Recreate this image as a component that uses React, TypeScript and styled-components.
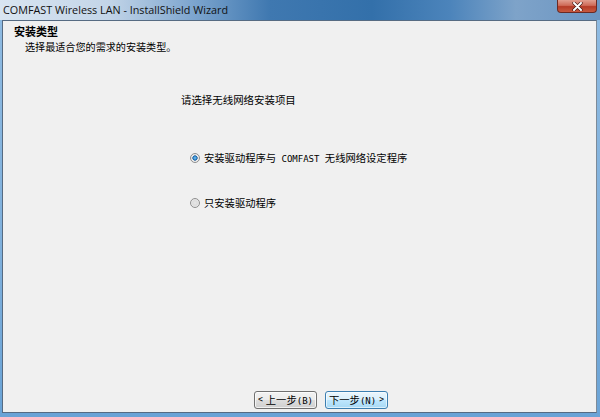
import React from "react";
import styled, { createGlobalStyle } from "styled-components";

const GlobalStyle = createGlobalStyle`
  html, body {
    margin: 0;
    padding: 0;
    width: 600px;
    height: 417px;
    overflow: hidden;
    background: #ffffff;
  }
`;

const CJK = `"Noto Sans CJK SC", "Noto Sans", sans-serif`;

const SWindow = styled.div`
  width: 600px;
  height: 417px;
  display: flex;
  flex-direction: column;
  background: linear-gradient(180deg, #8fbbe2 0%, #7fb0dc 60%, #6aa3d6 100%);
  overflow: hidden;
`;

const STitleBar = styled.div`
  height: 20px;
  flex: none;
  display: flex;
  align-items: flex-start;
  justify-content: space-between;
  padding-left: 3px;
  padding-right: 3px;
  background: linear-gradient(
    90deg,
    #d9e5f1 0%,
    #c3d5e8 18%,
    #7ea6cf 32%,
    #3f78b0 45%,
    #3370aa 62%,
    #4c84bb 75%,
    #7ea3c9 86%,
    #6b95c2 100%
  );
`;

const STitle = styled.div`
  font-family: "Open Sans", "Noto Sans", sans-serif;
  font-size: 10.8px;
  line-height: 20px;
  color: #111111;
  white-space: nowrap;
`;

const SClose = styled.div`
  width: 40px;
  height: 13px;
  box-sizing: border-box;
  border: 1px solid #6b2a24;
  border-top: none;
  border-radius: 0 0 4px 4px;
  background: linear-gradient(180deg, #e19e90 0%, #cf6b58 45%, #b53b27 55%, #c85a40 100%);
  display: flex;
  align-items: center;
  justify-content: center;
`;

const SFrame = styled.div`
  flex: 1;
  display: flex;
  padding: 0 3px 4px 2px;
  min-height: 0;
`;

const SClient = styled.div`
  flex: 1;
  display: flex;
  flex-direction: column;
  background: #f0f0f0;
  border: 1px solid #566b82;
  border-right-color: #7d8b99;
  font-family: ${CJK};
  color: #000000;
`;

const SHeader = styled.div`
  display: flex;
  flex-direction: column;
  gap: 2px;
  padding: 3px 0 0 11px;
`;

const SHeading = styled.div`
  font-size: 11px;
  font-weight: 700;
  line-height: 14px;
`;

const SSubtitle = styled.div`
  font-size: 10.1px;
  line-height: 14px;
  padding-left: 11px;
`;

const SBody = styled.div`
  flex: 1;
  display: flex;
  flex-direction: column;
  padding-left: 178px;
`;

const SQuestion = styled.div`
  font-size: 10.45px;
  line-height: 14px;
  margin-top: 39px;
`;

const SOptions = styled.div`
  display: flex;
  flex-direction: column;
  gap: 31px;
  margin-top: 44px;
  padding-left: 9px;
`;

const SOption = styled.label`
  display: flex;
  align-items: center;
  gap: 4px;
  height: 14px;
  font-size: 10.3px;
  line-height: 14px;
  white-space: nowrap;
`;

const SRadio = styled.span<{ checked?: boolean }>`
  width: 10px;
  height: 10px;
  box-sizing: border-box;
  border-radius: 50%;
  border: 1px solid #8f8f8f;
  background: ${({ checked }) =>
    checked
      ? "radial-gradient(circle, #7ec6f2 0%, #2a7fc4 32%, #1a5a9a 42%, #e6e6e6 50%, #f8f8f8 100%)"
      : "radial-gradient(circle, #e8e8e8 0%, #dcdcdc 40%, #f6f6f6 100%)"};
  flex: none;
`;

const SLatin = styled.span`
  font-family: "DejaVu Sans Mono", "Liberation Mono", monospace;
  font-size: 9px;
  white-space: pre;
`;

const SFooter = styled.div`
  display: flex;
  gap: 8px;
  padding: 0 0 3px 251px;
`;

const SButton = styled.div<{ primary?: boolean }>`
  width: 63px;
  height: 18px;
  box-sizing: border-box;
  border-radius: 3px;
  border: 1px solid ${({ primary }) => (primary ? "#3c7fb1" : "#707070")};
  background: ${({ primary }) =>
    primary
      ? "linear-gradient(180deg, #eaf6fd 0%, #d9f0fc 48%, #bee6fd 52%, #a7d9f5 100%)"
      : "linear-gradient(180deg, #f2f2f2 0%, #ebebeb 48%, #dddddd 52%, #cfcfcf 100%)"};
  box-shadow: inset 0 0 0 1px
    ${({ primary }) => (primary ? "rgba(255,255,255,0.6)" : "rgba(255,255,255,0.7)")};
  display: flex;
  align-items: center;
  justify-content: center;
  gap: 3px;
  font-size: 10.3px;
  line-height: 14px;
  white-space: nowrap;
`;

const SArrow = styled.span`
  font-family: "DejaVu Sans Mono", "Liberation Mono", monospace;
  font-size: 8px;
`;

const App = () => (
  <>
    <GlobalStyle />
    <SWindow>
      <STitleBar>
        <STitle>COMFAST Wireless LAN - InstallShield Wizard</STitle>
        <SClose>
          <svg width="11" height="9" viewBox="0 0 11 9">
            <path
              d="M2 1 L9 8 M9 1 L2 8"
              stroke="#3a1410"
              strokeWidth="3.2"
              strokeLinecap="round"
            />
            <path
              d="M2 1 L9 8 M9 1 L2 8"
              stroke="#ffffff"
              strokeWidth="2"
              strokeLinecap="round"
            />
          </svg>
        </SClose>
      </STitleBar>
      <SFrame>
        <SClient>
          <SHeader>
            <SHeading>安装类型</SHeading>
            <SSubtitle>选择最适合您的需求的安装类型。</SSubtitle>
          </SHeader>
          <SBody>
            <SQuestion>请选择无线网络安装项目</SQuestion>
            <SOptions>
              <SOption>
                <SRadio checked />
                <span>
                  安装驱动程序与<SLatin>{" COMFAST "}</SLatin>无线网络设定程序
                </span>
              </SOption>
              <SOption>
                <SRadio />
                <span>只安装驱动程序</span>
              </SOption>
            </SOptions>
          </SBody>
          <SFooter>
            <SButton>
              <SArrow>&lt;</SArrow>
              <span>
                上一步<SLatin>(B)</SLatin>
              </span>
            </SButton>
            <SButton primary>
              <span>
                下一步<SLatin>(N)</SLatin>
              </span>
              <SArrow>&gt;</SArrow>
            </SButton>
          </SFooter>
        </SClient>
      </SFrame>
    </SWindow>
  </>
);

export default App;
